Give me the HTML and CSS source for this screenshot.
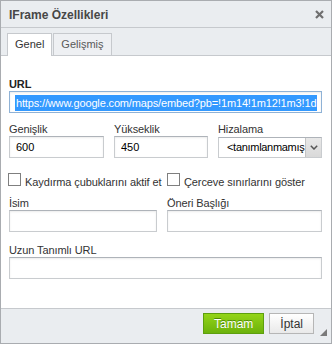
FILE: index.html
```html
<!DOCTYPE html>
<html lang="tr">
<head>
    <meta charset="UTF-8">
    <meta name="viewport" content="width=device-width, initial-scale=1.0">
    <title>IFrame Özellikleri</title>
    <link rel="stylesheet" href="styles.css">
</head>
<body>
    <!-- Dialog -->
    <div class="dialog">
        <div class="dialog-title">
            <span>IFrame Özellikleri</span>
            <a class="dialog-close" href="#" title="Kapat">
                <svg width="9" height="9" viewBox="0 0 9 9"><path d="M1 1L8 8M8 1L1 8" stroke="#6f6f6f" stroke-width="2.2" fill="none"/></svg>
            </a>
        </div>

        <!-- Tabs -->
        <div class="dialog-tabs">
            <a class="tab tab-active" href="#">Genel</a>
            <a class="tab" href="#">Gelişmiş</a>
        </div>

        <!-- Main fields -->
        <div class="dialog-body">
            <div class="field">
                <label class="field-label label-strong">URL</label>
                <div class="text-input url-input"><span class="selected">https://www.google.com/maps/embed?pb=!1m14!1m12!1m3!1d</span></div>
            </div>

            <div class="row row-three">
                <div class="field">
                    <label class="field-label">Genişlik</label>
                    <input class="text-input" type="text" value="600">
                </div>
                <div class="field">
                    <label class="field-label">Yükseklik</label>
                    <input class="text-input" type="text" value="450">
                </div>
                <div class="field">
                    <label class="field-label">Hizalama</label>
                    <div class="select">
                        <span class="select-value">&lt;tanımlanmamış</span>
                        <span class="select-arrow">
                            <svg width="8" height="5" viewBox="0 0 8 5"><path d="M0.8 0.8L4 4L7.2 0.8" stroke="#555" stroke-width="1.5" fill="none"/></svg>
                        </span>
                    </div>
                </div>
            </div>

            <div class="row row-two row-checks">
                <label class="check"><span class="checkbox"></span>Kaydırma çubuklarını aktif et</label>
                <label class="check"><span class="checkbox"></span>Çerceve sınırlarını göster</label>
            </div>

            <div class="row row-two row-names">
                <div class="field">
                    <label class="field-label">İsim</label>
                    <input class="text-input" type="text">
                </div>
                <div class="field">
                    <label class="field-label">Öneri Başlığı</label>
                    <input class="text-input" type="text">
                </div>
            </div>

            <div class="field field-long">
                <label class="field-label">Uzun Tanımlı URL</label>
                <input class="text-input" type="text">
            </div>
        </div>

        <!-- Footer -->
        <div class="dialog-footer">
            <button class="btn btn-ok" type="button">Tamam</button>
            <button class="btn" type="button">İptal</button>
            <span class="resize-handle">
                <svg width="7" height="7" viewBox="0 0 7 7"><polygon points="7,0 7,7 0,7" fill="#7a7a7a"/></svg>
            </span>
        </div>
    </div>
</body>
</html>
```

FILE: styles.css
```css
/* Basic reset */
* {
    margin: 0;
    padding: 0;
    box-sizing: border-box;
}

body {
    background-color: #fff;
    font-family: "Liberation Sans", Arial, sans-serif;
    font-size: 11px;
    color: #333;
}

/* Dialog frame */
.dialog {
    width: 332px;
    height: 344px;
    border: 1px solid #a9acb0;
    background-color: #fff;
    display: flex;
    flex-direction: column;
}

.dialog-title {
    height: 27px;
    padding: 2px 7px 0 8px;
    background-color: #eaedf0;
    border-bottom: 1px solid #c6c9cd;
    display: flex;
    justify-content: space-between;
    align-items: center;
    font-size: 12px;
    font-weight: bold;
    color: #474747;
}

.dialog-close {
    display: flex;
    margin-top: -2px;
}

/* Tabs */
.dialog-tabs {
    height: 28px;
    padding-left: 6px;
    background-color: #eaedf0;
    border-bottom: 1px solid #c6c9cd;
    display: flex;
    align-items: flex-end;
    gap: 1px;
}

.tab {
    height: 22px;
    padding: 0 7px;
    line-height: 21px;
    border: 1px solid #c6c9cd;
    border-bottom: none;
    background-color: #eef0f3;
    color: #595959;
    text-decoration: none;
}

.tab-active {
    height: 23px;
    margin-bottom: -1px;
    background-color: #fff;
    color: #333;
}

/* Fields */
.dialog-body {
    flex: 1;
    padding: 22px 9px 0 8px;
    letter-spacing: -0.1px;
}

.field-label {
    display: block;
    line-height: 13px;
    color: #333;
}

.label-strong {
    font-weight: bold;
    color: #222;
}

.text-input {
    display: block;
    width: 100%;
    height: 22px;
    padding: 0 6px;
    border: 1px solid #c9cccf;
    border-top-color: #aeb3b9;
    background-color: #fff;
    box-shadow: inset 0 1px 2px rgba(0, 0, 0, 0.08);
    font-family: inherit;
    font-size: 11px;
    line-height: 20px;
    color: #000;
    outline: none;
}

.url-input {
    padding: 1px 5px 0;
    overflow: hidden;
    white-space: nowrap;
    border-color: #8fb2d6;
    letter-spacing: -0.15px;
}

.url-input .selected {
    display: inline-block;
    line-height: 16px;
    padding: 0 1px;
    background-color: #3399ff;
    color: #fff;
}

.row {
    display: grid;
    column-gap: 10px;
}

.row-three {
    grid-template-columns: 95px 94px 104px;
    margin-top: 10px;
}

.row-two {
    grid-template-columns: 148px 155px;
}

.row-three .field {
    display: flex;
    flex-direction: column;
}

/* Select */
.select {
    margin-top: auto;
    height: 21px;
    display: flex;
    border: 1px solid #c9cccf;
    border-top-color: #aeb3b9;
    background-color: #fff;
    overflow: hidden;
}

.select-value {
    flex: 1;
    padding-left: 8px;
    line-height: 19px;
    color: #000;
    letter-spacing: -0.3px;
    white-space: nowrap;
    overflow: hidden;
}

.select-arrow {
    width: 16px;
    border-left: 1px solid #c3c3c3;
    background: linear-gradient(#e8e8e8, #d9d9d9);
    display: flex;
    align-items: center;
    justify-content: center;
}

/* Checkboxes */
.row-checks {
    margin-top: 15px;
    line-height: 13px;
    white-space: nowrap;
}

.check {
    color: #333;
}

.checkbox {
    display: inline-block;
    width: 13px;
    height: 13px;
    margin-right: 4px;
    border: 1px solid #7f7f7f;
    background-color: #fff;
}

.row-checks .check:first-child .checkbox {
    margin-left: -1px;
}

.row-names {
    margin-top: 8px;
}

.field-long {
    margin-top: 12px;
}

/* Footer */
.dialog-footer {
    position: relative;
    height: 35px;
    padding: 4px 17px 0 0;
    background-color: #eaedf0;
    border-top: 1px solid #c6c9cd;
    display: flex;
    justify-content: flex-end;
    align-items: flex-start;
    gap: 5px;
}

.btn {
    height: 21px;
    padding: 0 10px;
    border: 1px solid #b6b6b6;
    background: linear-gradient(#fff, #e9e9e9);
    font-family: inherit;
    font-size: 12px;
    color: #333;
    cursor: pointer;
}

.btn-ok {
    border-color: #5d9f0e;
    background: linear-gradient(#93d418, #6cb20c);
    color: #fff;
    text-shadow: 0 -1px 0 #4e8a06;
}

.resize-handle {
    position: absolute;
    right: 4px;
    bottom: 7px;
    display: flex;
}
```
